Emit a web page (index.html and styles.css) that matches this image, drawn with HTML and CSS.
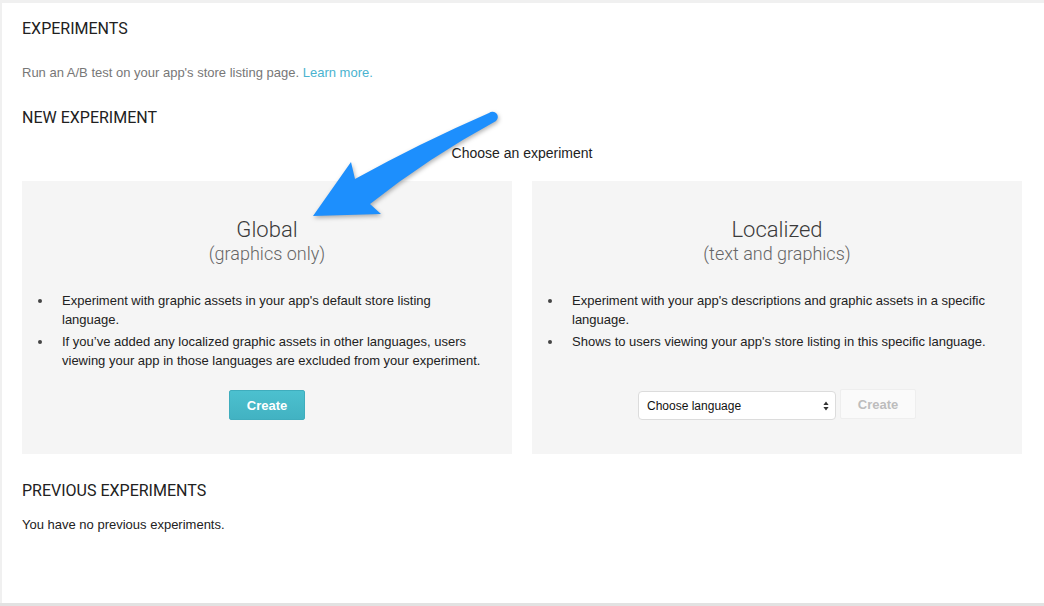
FILE: index.html
```html
<!DOCTYPE html>
<html>
<head>
<meta charset="utf-8">
<link rel="stylesheet" href="styles.css">
</head>
<body>
<div class="frame">
  <main class="page">
    <h1 class="section-title first">EXPERIMENTS</h1>
    <p class="intro">Run an A/B test on your app's store listing page. <a href="#" class="link">Learn more.</a></p>
    <h2 class="section-title">NEW EXPERIMENT</h2>
    <p class="choose">Choose an experiment</p>
    <div class="cards">
      <section class="card">
        <div class="card-title">Global</div>
        <div class="card-sub">(graphics only)</div>
        <ul class="bullets">
          <li>Experiment with graphic assets in your app's default store listing language.</li>
          <li>If you’ve added any localized graphic assets in other languages, users viewing your app in those languages are excluded from your experiment.</li>
        </ul>
        <div class="actions">
          <button class="btn btn-primary">Create</button>
        </div>
      </section>
      <section class="card">
        <div class="card-title">Localized</div>
        <div class="card-sub">(text and graphics)</div>
        <ul class="bullets">
          <li>Experiment with your app's descriptions and graphic assets in a specific language.</li>
          <li>Shows to users viewing your app's store listing in this specific language.</li>
        </ul>
        <div class="actions">
          <span class="select-wrap">
            <select class="select"><option>Choose language</option></select>
            <svg class="select-arrows" width="6" height="10" viewBox="0 0 6 10"><path d="M3 0.5 L5.6 4 H0.4 Z M3 9.5 L5.6 6 H0.4 Z" fill="#333"/></svg>
          </span>
          <button class="btn btn-disabled">Create</button>
        </div>
      </section>
    </div>
    <h2 class="section-title prev">PREVIOUS EXPERIMENTS</h2>
    <p class="none">You have no previous experiments.</p>
    <svg class="arrow" width="210" height="120" viewBox="300 105 210 120">
      <path d="M313 216 L351 162 L355 179 Q 420 143 489 113 A 4 4 0 0 1 496 121 Q 428 158 370 204 L381 214 Z" fill="#1d8ffd"/>
    </svg>
  </main>
</div>
</body>
</html>
```

FILE: styles.css
```css
html, body {
  margin: 0;
  padding: 0;
}
body {
  background: #f0f0f0;
  width: 1044px;
  height: 606px;
  overflow: hidden;
}
.frame {
  padding: 3px 0 0 2px;
  box-sizing: border-box;
  border-bottom: 3px solid #e2e2e2;
  height: 606px;
}
.page {
  position: relative;
  background: #fff;
  height: 600px;
  box-sizing: border-box;
  padding: 16px 22px 0 20px;
  font-family: "Liberation Sans", Arial, sans-serif;
  color: #222;
}
.section-title {
  font-family: Roboto, "Liberation Sans", sans-serif;
  font-weight: 400;
  font-size: 16px;
  line-height: 20px;
  color: #212121;
  margin: 0;
}
.intro {
  margin: 26px 0 0;
  font-size: 13px;
  line-height: 16px;
  color: #777;
}
.link {
  color: #4ab3cf;
  text-decoration: none;
}
.intro + .section-title {
  margin-top: 27px;
}
.choose {
  margin: 17px 0 0;
  text-align: center;
  font-size: 14px;
  line-height: 16px;
  color: #222;
}
.cards {
  margin-top: 20px;
  display: grid;
  grid-template-columns: 490px 490px;
  gap: 20px;
}
.card {
  background: #f5f5f5;
  height: 273px;
  box-sizing: border-box;
  padding: 36px 0 34px;
  display: flex;
  flex-direction: column;
}
.card-title {
  text-align: center;
  font-family: Roboto, "Liberation Sans", sans-serif;
  font-weight: 300;
  font-size: 22px;
  line-height: 26px;
  color: #3a3a3a;
}
.card-sub {
  text-align: center;
  font-family: Roboto, "Liberation Sans", sans-serif;
  font-weight: 300;
  font-size: 18px;
  line-height: 22px;
  color: #666;
}
.bullets {
  list-style: none;
  margin: 26px 0 0;
  padding: 0 24px 0 40px;
  font-size: 13px;
  line-height: 19px;
  color: #222;
}
.bullets li {
  position: relative;
  margin-bottom: 3px;
}
.bullets li::before {
  content: "";
  position: absolute;
  left: -24px;
  top: 8px;
  width: 4px;
  height: 4px;
  border-radius: 50%;
  background: #444;
}
.actions {
  margin-top: auto;
  display: flex;
  justify-content: center;
  align-items: flex-start;
  gap: 4px;
}
.btn {
  width: 76px;
  height: 30px;
  border-radius: 2px;
  font-family: "Liberation Sans", Arial, sans-serif;
  font-weight: 700;
  font-size: 13px;
  padding: 0;
  cursor: pointer;
}
.btn-primary {
  background: linear-gradient(#4cc0cf, #42b2c2);
  border: 1px solid #3fadbd;
  color: #fff;
}
.btn-disabled {
  background: #fafafa;
  border: 1px solid #eeeeee;
  color: #bdbdbd;
}
.select-wrap {
  position: relative;
  display: block;
  margin-top: 2px;
}
.select {
  appearance: none;
  -webkit-appearance: none;
  width: 198px;
  height: 29px;
  border: 1px solid #dcdcdc;
  border-radius: 4px;
  background: #fff;
  font-family: "Liberation Sans", Arial, sans-serif;
  font-size: 12px;
  color: #111;
  padding: 0 0 0 8px;
  display: block;
}
.select-arrows {
  position: absolute;
  right: 7px;
  top: 10px;
}
.section-title.prev {
  margin-top: 27px;
}
.none {
  margin: 16px 0 0;
  font-size: 13px;
  line-height: 16px;
  color: #222;
}
.arrow {
  position: absolute;
  left: 298px;
  top: 102px;
  filter: drop-shadow(1px 2px 2px rgba(0,0,0,0.3));
  overflow: visible;
}
```
